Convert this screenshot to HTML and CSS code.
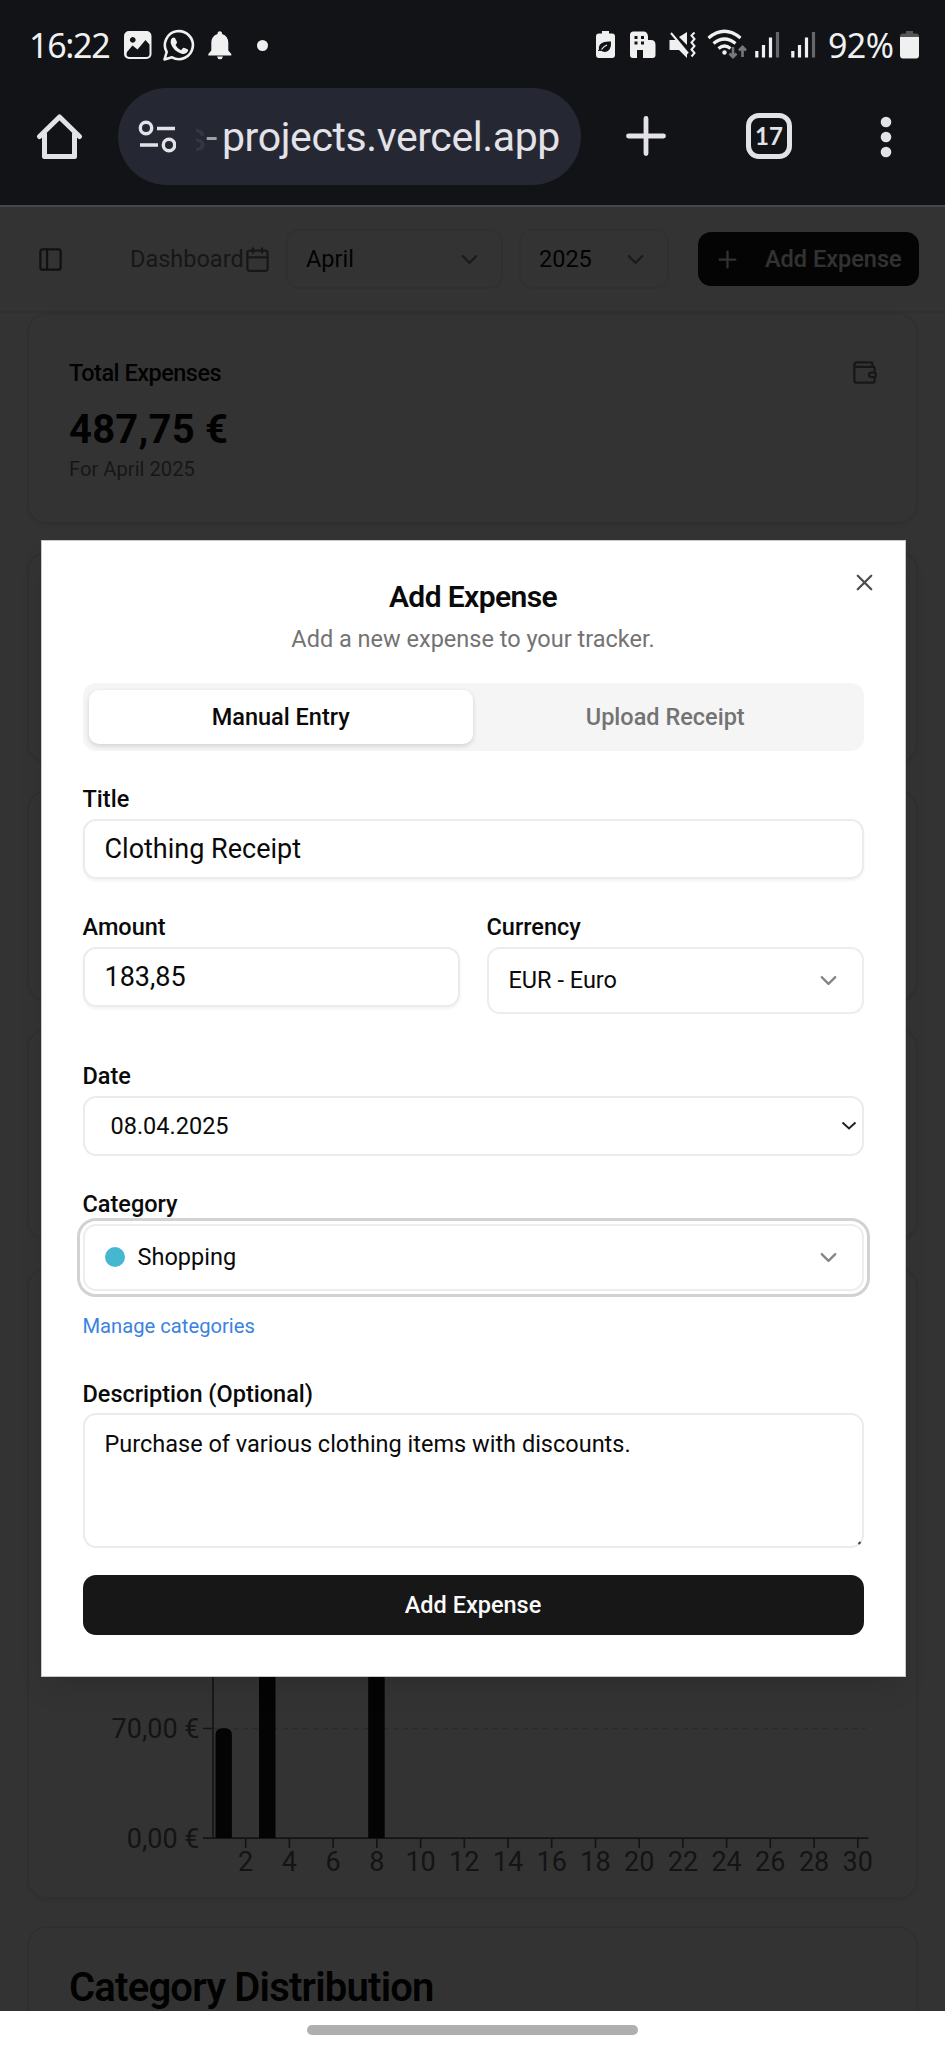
FILE: index.html
```html
<!DOCTYPE html>
<html lang="en">
<head>
<meta charset="utf-8">
<title>Expense Tracker</title>
<link rel="stylesheet" href="styles.css">
</head>
<body>
<div class="phone">
  <div class="status">
    <span class="time">16:22</span>
    <svg class="st-photo" width="28" height="32" viewBox="124 29 28 32"><path fill-rule="evenodd" fill="#f0f0f0" d="M129 31h17.500a5 5 0 0 1 5 5v18a5 5 0 0 1-5 5H129a5 5 0 0 1-5-5V36a5 5 0 0 1 5-5zM127 52l5.500-6.500 5 4 8-9.500 4 4.500V54q0 3-3 3h-17q-3 0-3-3zM132.700 37a2.900 2.900 0 1 0 .1 0z"/></svg>
    <svg class="st-wa" width="33" height="34" viewBox="162 28 33 34"><path fill="none" stroke="#f0f0f0" stroke-width="2.600" stroke-linejoin="round" d="M164.500 59.500l2.200-7.500a14 14 0 1 1 5.300 5.300z"/><path fill="#f0f0f0" d="M171 39.500q2-3 4-1.500l2 4q.3 1-1.500 3 2 4 5.500 5.200l2-2.200q1-.6 5 1.600.8 1.200-1 3-2.500 2.200-6 .8-7.500-2.400-10-9.400-.6-2.500 0-4.500z"/></svg>
    <svg class="st-bell" width="24" height="32" viewBox="208 29 24 32"><path fill="#f0f0f0" d="M217.500 34q0-2.800 2.300-2.800t2.300 2.800q6.200 2 6.200 9v7.500l3 3.500v1.500h-23V54l3-3.500V43q0-7 6.200-9zM217 56.500h6q-.6 2.800-3 2.800t-3-2.800z"/></svg>
    <span class="st-dot"></span>
    <span class="spacer"></span>
    <svg width="20" height="32" viewBox="596 29 20 32"><path fill="#f0f0f0" d="M602 31h7v2.500h3q3 0 3 3V55q0 3-3 3h-13q-3 0-3-3V36.500q0-3 3-3h3z"/><path fill="#111317" d="M598 51q-.5-1 1-1.500-1-2 1-5 3-3.500 11-3 .5 5-1.500 8-3 4-8 1.500-1.500-.3-3.500 0z"/><path fill="none" stroke="#f0f0f0" stroke-width="1.200" d="M601.500 49.500q2-3 5.500-4.500"/></svg>
    <svg class="st-gap-14" width="26" height="32" viewBox="630 29 26 32"><path fill="#f0f0f0" d="M633.500 31.500h10q4 0 4.500 5v3.500h3q4.500 0 4.500 5v10q0 3-3 3H643v-8h-6v8h-4q-3 0-3-3V35q0-3.500 3.500-3.500z"/><g fill="#111317"><rect x="634.500" y="36" width="3" height="3"/><rect x="641" y="36" width="3" height="3"/><rect x="634.500" y="41.500" width="3" height="3"/><rect x="641" y="41.500" width="3" height="3"/></g></svg>
    <svg class="st-gap-12" width="30" height="32" viewBox="668 29 30 32"><path fill="#f0f0f0" d="M669.500 40h7l10.500 13v5l-8-8h-9.500zM679 37l8-5v13z"/><path fill="none" stroke="#f0f0f0" stroke-width="2" d="M671 33l17 20.500M694.500 32.500l-3 3 3 3.500-3 3.500 3 3.500-3 3.500 3 3.500-3 3.500"/></svg>
    <svg class="st-gap-9" width="42" height="34" viewBox="707 28 42 34"><g fill="none" stroke="#f0f0f0" stroke-width="3.200"><path d="M708.500 38q16-13.500 32 0M713.500 43.500q11-9 22 0M718.500 48.500q6-5 12 0"/></g><circle cx="724.500" cy="52.500" r="2.200" fill="#f0f0f0"/><g fill="none" stroke="#77787b" stroke-width="2.600"><path d="M733 47v10M729.500 53.500l3.500 3.700 3.500-3.700M742.500 57V47M739 50.500l3.500-3.700 3.500 3.700"/></g></svg>
    <svg class="st-gap-6" width="25" height="32" viewBox="755 29 25 32"><g stroke="#f0f0f0" stroke-width="3.200"><path d="M756.800 51v6.500M763.500 45v12.500M770.500 37.500v20"/><path stroke="#66676a" d="M777.500 32v25.500"/></g></svg>
    <svg class="st-gap-11" width="25" height="32" viewBox="755 29 25 32"><g stroke="#f0f0f0" stroke-width="3.200"><path d="M756.800 51v6.500M763.500 45v12.500M770.500 37.500v20"/><path stroke="#66676a" d="M777.500 32v25.500"/></g></svg>
    <span class="pct">92%</span>
    <svg width="20" height="32" viewBox="899 29 20 32"><path fill="#55565a" d="M905 31h7v2.500h3q3 0 3 3V40h-19v-3.500q0-3 3-3h3z"/><path fill="#f0f0f0" d="M899 37h19v18q0 3.500-3 3.500h-13q-3 0-3-3.500z"/></svg>
  </div>

  <div class="toolbar">
    <svg class="home" width="48" height="48" viewBox="36 112 48 48"><path fill="none" stroke="#e3e2e8" stroke-width="5" stroke-linecap="round" stroke-linejoin="round" d="M39.500 136.500L59.500 117l20 19.500M44.500 134v22.500h30V134"/></svg>
    <div class="omnibox">
      <svg width="38" height="34" viewBox="138 120 38 34"><g fill="none" stroke="#e3e2e8" stroke-width="3.400"><circle cx="146" cy="128" r="5.700"/><circle cx="169" cy="145" r="5.700"/><path d="M157 128.500h18M140 145h18"/></g></svg>
      <span class="url"><span class="fade">s</span><span class="dash">-</span>projects.vercel.app</span>
    </div>
    <svg class="newtab" width="42" height="42" viewBox="0 0 42 42"><path stroke="#e3e2e8" stroke-width="4.800" stroke-linecap="round" d="M21 3.500v35M3.500 21h35"/></svg>
    <span class="tabcount">17</span>
    <svg class="more" width="12" height="42" viewBox="0 0 12 42"><g fill="#e3e2e8"><circle cx="6" cy="6" r="5.300"/><circle cx="6" cy="21" r="5.300"/><circle cx="6" cy="36" r="5.300"/></g></svg>
  </div>

  <div class="page">
    <header class="appbar">
      <svg class="icon panel" viewBox="0 0 24 24"><rect width="18" height="18" x="3" y="3" rx="2"/><path d="M9 3v18"/></svg>
      <span class="crumb">Dashboard</span>
      <svg class="icon" viewBox="0 0 24 24"><path d="M8 2v4M16 2v4"/><rect width="18" height="18" x="3" y="4" rx="2"/><path d="M3 10h18"/></svg>
      <div class="select month">April<svg class="icon chev" viewBox="0 0 24 24"><path d="m6 9 6 6 6-6"/></svg></div>
      <div class="select year">2025<svg class="icon chev" viewBox="0 0 24 24"><path d="m6 9 6 6 6-6"/></svg></div>
      <div class="add"><svg class="icon" viewBox="0 0 24 24"><path d="M5 12h14M12 5v14"/></svg>Add Expense</div>
    </header>
    <main class="cards">
      <section class="card stat">
        <div class="stat-head">Total Expenses<svg class="icon wallet" viewBox="0 0 24 24"><path d="M19 7V4a1 1 0 0 0-1-1H5a2 2 0 0 0 0 4h15a1 1 0 0 1 1 1v4h-3a2 2 0 0 0 0 4h3a1 1 0 0 0 1-1v-2a1 1 0 0 0-1-1"/><path d="M3 5v14a2 2 0 0 0 2 2h15a1 1 0 0 0 1-1v-4"/></svg></div>
        <div class="stat-value">487,75 €</div>
        <div class="stat-note">For April 2025</div>
      </section>
      <section class="card stat"></section>
      <section class="card stat"></section>
      <section class="card stat"></section>
      <section class="card chart">
        <svg width="887" height="279" viewBox="28.500 1618 887 279">
          <path d="M212.500 1728.500H865" stroke="#d0d0d0" stroke-width="1.700" stroke-dasharray="5 5"/>
          <g stroke="#666" stroke-width="1.700"><path d="M212.500 1618v220M202.500 1728.500h10M202.500 1838.200H868"/>
          <path d="M245.200 1838v10M288.900 1838v10M332.600 1838v10M376.400 1838v10M420.100 1838v10M463.800 1838v10M507.500 1838v10M551.200 1838v10M595 1838v10M638.700 1838v10M682.400 1838v10M726.100 1838v10M769.800 1838v10M813.600 1838v10M857.300 1838v10"/></g>
          <g fill="#171717"><path d="M215 1838v-103q0-6.700 6.700-6.700h3q6.700 0 6.700 6.700v103z"/><path d="M258.500 1618H275v220h-16.500zM367.700 1618h16.500v220h-16.500z"/></g>
          <g class="ylab"><text x="199" y="1738">70,00 €</text><text x="199" y="1848">0,00 €</text></g>
          <g class="xlab"><text x="245.200" y="1871">2</text><text x="288.900" y="1871">4</text><text x="332.600" y="1871">6</text><text x="376.400" y="1871">8</text><text x="420.100" y="1871">10</text><text x="463.800" y="1871">12</text><text x="507.500" y="1871">14</text><text x="551.200" y="1871">16</text><text x="595" y="1871">18</text><text x="638.700" y="1871">20</text><text x="682.400" y="1871">22</text><text x="726.100" y="1871">24</text><text x="769.800" y="1871">26</text><text x="813.600" y="1871">28</text><text x="857.300" y="1871">30</text></g>
        </svg>
      </section>
      <section class="card dist"><h2>Category Distribution</h2></section>
    </main>

    <div class="overlay"></div>
    <div class="dialog">
      <svg class="icon close" viewBox="0 0 24 24"><path d="M18 6 6 18M6 6l12 12"/></svg>
      <h1>Add Expense</h1>
      <p class="desc">Add a new expense to your tracker.</p>
      <div class="tabs"><span class="tab active">Manual Entry</span><span class="tab">Upload Receipt</span></div>
      <div class="field">
        <label>Title</label>
        <div class="input">Clothing Receipt</div>
      </div>
      <div class="pair">
        <div class="field"><label>Amount</label><div class="input">183,85</div></div>
        <div class="field"><label>Currency</label><div class="select tall">EUR - Euro<svg class="icon chev" viewBox="0 0 24 24"><path d="m6 9 6 6 6-6"/></svg></div></div>
      </div>
      <div class="field date">
        <label>Date</label>
        <div class="input small">08.04.2025<svg class="datechev" width="16" height="12" viewBox="0 0 16 12"><path d="M1.500 2.500l6.500 6 6.500-6"/></svg></div>
      </div>
      <div class="field">
        <label>Category</label>
        <div class="select tall focus"><span class="dot"></span>Shopping<svg class="icon chev" viewBox="0 0 24 24"><path d="m6 9 6 6 6-6"/></svg></div>
        <a class="manage">Manage categories</a>
      </div>
      <div class="field last">
        <label>Description (Optional)</label>
        <div class="textarea">Purchase of various clothing items with discounts.<span class="grip"></span></div>
      </div>
      <div class="submit">Add Expense</div>
    </div>
  </div>
  <div class="gesture"><span></span></div>
</div>
</body>
</html>
```
FILE: styles.css
```css
* { box-sizing: border-box; margin: 0; }
body { background: #111317; font-family: Roboto, "Liberation Sans", sans-serif; color: #0a0a0a; font-size: 23.5px; }
svg { display: block; flex: none; }
.phone { width: 945px; height: 2048px; display: flex; flex-direction: column; overflow: hidden; }

.status { height: 88px; padding: 2px 25px 0 29px; display: flex; align-items: center; color: #f0f0f0; font-family: "Noto Sans", sans-serif; font-size: 34px; line-height: 40px; }
.time { width: 95px; letter-spacing: -1.3px; white-space: nowrap; }
.st-wa { margin-left: 10px; }
.st-bell { margin-left: 13px; }
.st-dot { width: 11px; height: 11px; border-radius: 50%; background: #f0f0f0; margin-left: 25px; }
.spacer { flex: 1; }
.st-gap-14 { margin-left: 14px; }
.st-gap-12 { margin-left: 12px; }
.st-gap-9 { margin-left: 9px; }
.st-gap-6 { margin-left: 6px; }
.st-gap-11 { margin-left: 11px; }
.pct { width: 71px; margin-left: 12px; margin-right: 1px; letter-spacing: -.6px; white-space: nowrap; }

.toolbar { height: 117px; display: flex; align-items: flex-start; color: #e3e2e8; }
.home { margin: 24px 0 0 36px; }
.omnibox { width: 463px; height: 97px; margin-left: 34px; border-radius: 49px; background: #252832; display: flex; align-items: center; padding-left: 20px; }
.url { font-size: 41px; line-height: 50px; margin-left: 20px; letter-spacing: -.4px; white-space: nowrap; display: flex; }
.fade { width: 10px; overflow: hidden; color: #343741; direction: rtl; }
.dash { width: 16px; color: #a0a1a8; }
.newtab { margin: 27px 0 0 44px; }
.tabcount { width: 46px; height: 46px; margin: 25px 0 0 79px; border: 5px solid #e3e2e8; border-radius: 13px; font: bold 24px/36px Lato, sans-serif; text-align: center; }
.more { margin: 28px 0 0 88px; }

.page { position: relative; height: 1806px; background: #fff; overflow: hidden; border-top: 2px solid #47474b; }
.icon { width: 27px; height: 27px; fill: none; stroke: #737373; stroke-width: 2; stroke-linecap: round; stroke-linejoin: round; }
.appbar { height: 106px; padding: 0 26px 0 37px; border-bottom: 2px solid #ededed; display: flex; align-items: center; }
.panel { stroke: #555; }
.crumb { width: 114px; margin-left: 66px; color: #737373; white-space: nowrap; }
.select { height: 60px; border: 2px solid #ededed; border-radius: 13px; display: flex; align-items: center; padding: 0 20px; font-size: 23.5px; white-space: nowrap; }
.chev { margin-left: auto; stroke: #858585; }
.month { width: 217px; margin-left: 15px; padding: 0 18px; }
.year { width: 150px; margin-left: 16px; padding: 0 18px; }
.add { height: 54px; width: 221px; margin-left: auto; background: #171717; color: #fafafa; border-radius: 13px; display: flex; align-items: center; padding: 0 16px; gap: 24px; font-weight: 500; white-space: nowrap; }
.add .icon { stroke: #fafafa; }

.cards { padding: 0 27px; display: flex; flex-direction: column; gap: 27px; }
.card { flex: none; border: 2px solid #ebebeb; border-radius: 20px; box-shadow: 0 2px 4px rgba(0,0,0,.08); }
.stat { height: 211.400px; padding: 42px 38px 0 40px; }
.stat-head { display: flex; justify-content: space-between; align-items: center; height: 32px; font-weight: 500; letter-spacing: -.5px; }
.wallet { margin-top: -2px; }
.stat-value { font-size: 40px; font-weight: 700; line-height: 54px; margin-top: 14px; letter-spacing: .2px; }
.stat-note { font-size: 20.200px; line-height: 26px; margin-top: -1px; color: #737373; }
.chart { height: 632px; display: flex; align-items: flex-end; }
.ylab, .xlab { font-size: 27px; fill: #666; }
.ylab { text-anchor: end; }
.xlab { text-anchor: middle; }
.dist { height: 200px; padding: 35px 40px; }
.dist h2 { font-size: 40px; font-weight: 600; line-height: 50px; letter-spacing: -.8px; }

.overlay { position: absolute; inset: 0; background: rgba(0,0,0,.8); }
.dialog { position: absolute; left: 40.5px; top: 333px; width: 865px; height: 1137px; background: #fff; border: 1px solid #c8c8c8; padding: 39px 41px 0 41px; box-shadow: 0 16px 26px -5px rgba(0,0,0,.1); }
.close { position: absolute; right: 27px; top: 28px; stroke: #4d4d4d; }
h1 { font-size: 30px; font-weight: 600; line-height: 34px; letter-spacing: -.6px; text-align: center; }
.desc { line-height: 34px; margin-top: 8px; color: #737373; text-align: center; }
.tabs { margin-top: 27px; height: 67.500px; background: #f5f5f5; border-radius: 13px; padding: 7px 6px; display: flex; font-weight: 500; }
.tab { flex: 1; display: flex; align-items: center; justify-content: center; color: #737373; border-radius: 10px; }
.tab.active { background: #fff; color: #0a0a0a; box-shadow: 0 2px 5px rgba(0,0,0,.15); }
.field { margin-top: 36px; }
label { display: block; height: 24px; line-height: 24px; font-weight: 500; margin-bottom: 8px; }
.input { height: 60px; border: 2px solid #ebebeb; border-radius: 13px; padding: 0 20px; display: flex; align-items: center; font-size: 27px; box-shadow: 0 2px 3px rgba(0,0,0,.05); }
.pair { display: grid; grid-template-columns: 1fr 1fr; gap: 27px; }
.tall { height: 67px; }
.date { margin-top: 50px; }
.small { font-size: 23.5px; padding: 0 5px 0 26px; box-shadow: none; }
.datechev { margin-left: auto; fill: none; stroke: #222; stroke-width: 2; }
.focus { outline: 3px solid #d2d2d2; outline-offset: 3px; }
.dot { width: 20px; height: 20px; margin-right: 13px; border-radius: 50%; background: #45b7d1; }
.manage { display: block; margin-top: 22px; font-size: 20.200px; line-height: 26px; color: #3b82e0; }
.last { margin-top: 43px; }
.last label { margin-bottom: 7px; }
.textarea { position: relative; height: 135px; border: 2px solid #ebebeb; border-radius: 13px; padding: 12px 20px; line-height: 34px; }
.grip { position: absolute; right: 1px; bottom: 2px; width: 3px; height: 2px; background: #444; transform: rotate(-45deg); }
.submit { margin-top: 27px; height: 60.500px; border-radius: 13px; background: #171717; color: #fafafa; display: flex; align-items: center; justify-content: center; font-weight: 500; }

.gesture { height: 37px; background: #fff; padding: 14px 0 0 307px; }
.gesture span { display: block; width: 331px; height: 10px; border-radius: 5px; background: #afafaf; }
```
